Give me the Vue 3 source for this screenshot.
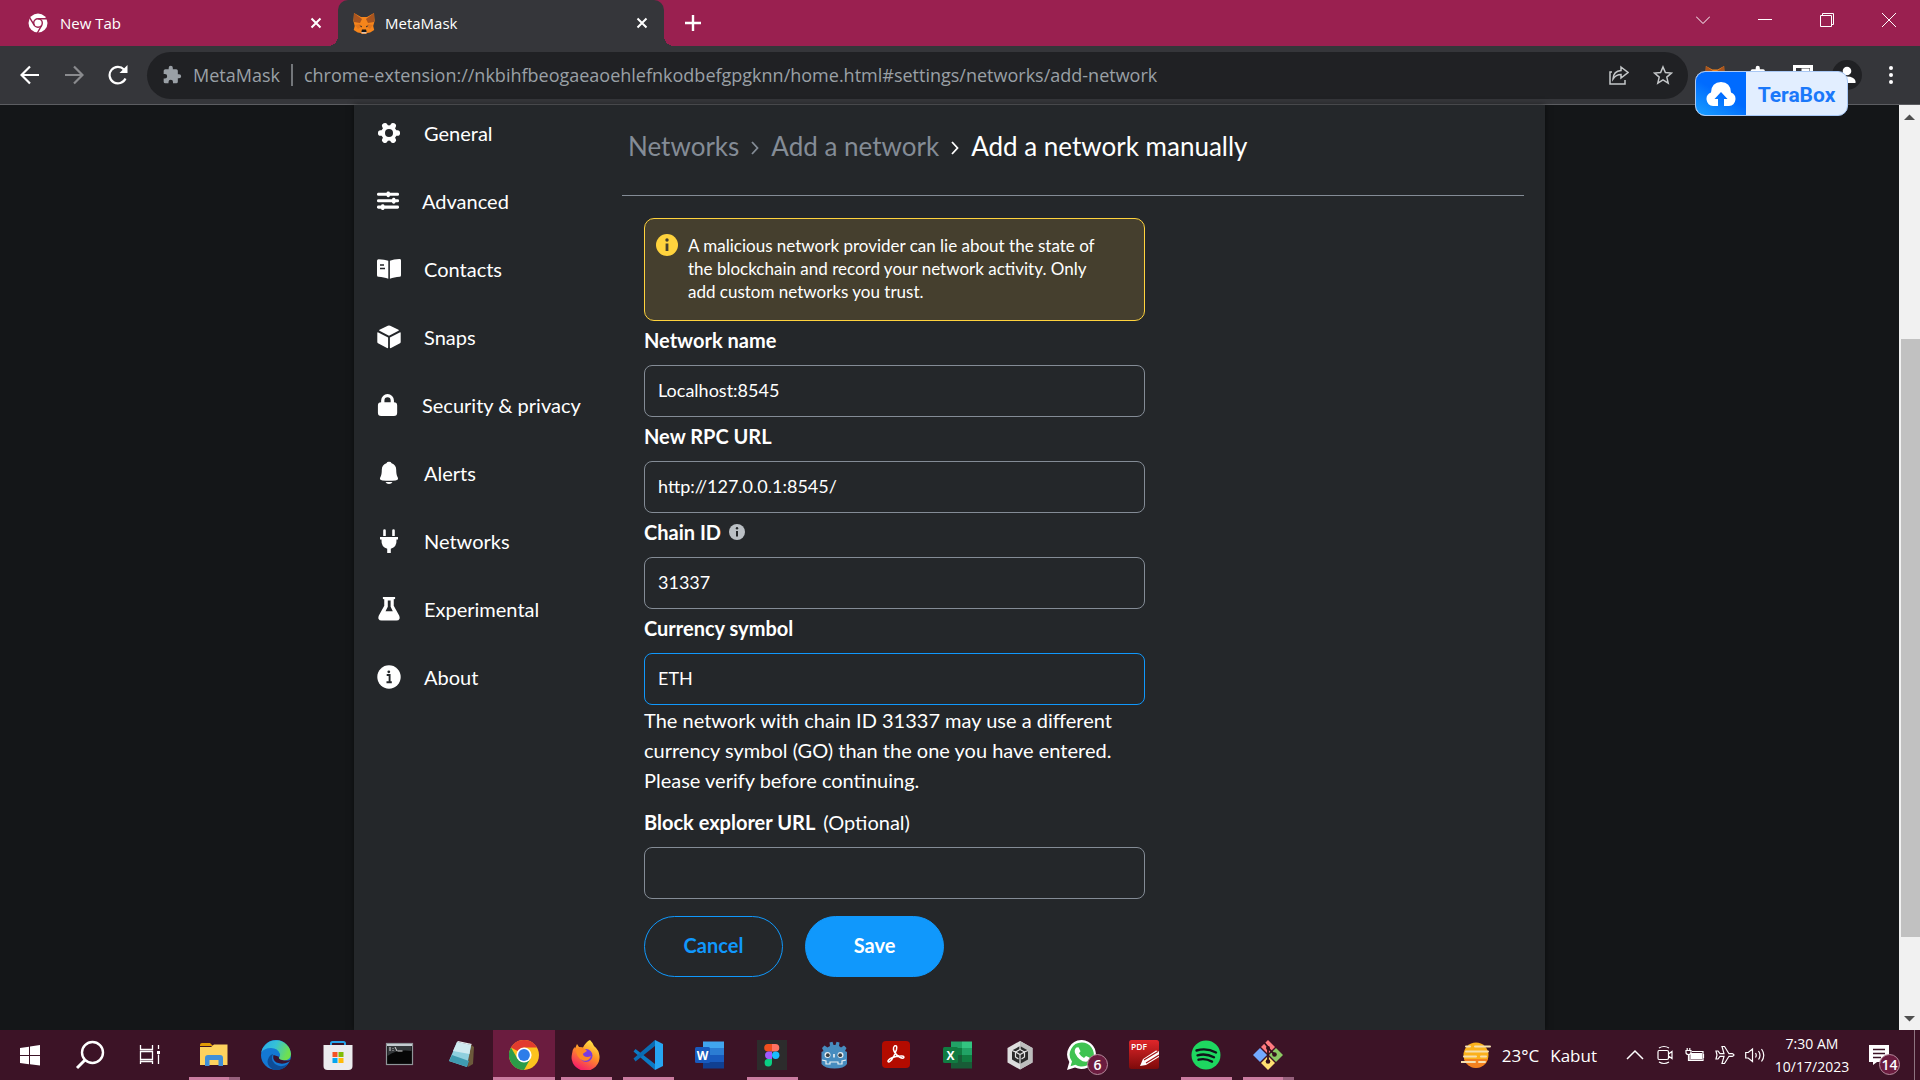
<script setup>
import { ref } from 'vue'

const address = ref('chrome-extension://nkbihfbeogaeaoehlefnkodbefgpgknn/home.html#settings/networks/add-network')

const foxArt =
  '<path d="M1 1l7 4h6l7-4 .6 8-1.4 5 1 4-4 2.500-3 .5-1.500 1.500h-3.500L7.700 21l-3-.5-4-2.500 1-4L.4 9z" fill="#f6851b"/>' +
  '<path d="M1 1l8 6-2 4-6-1zM21 1l-8 6 2 4 6-1z" fill="#a8541f"/>' +
  '<path d="M2 13l5-1 1 3-3 2zM20 13l-5-1-1 3 3 2z" fill="#e4761b"/>' +
  '<path d="M6.500 13.500l2.500.5-.5 1.500zM15.500 13.500l-2.500.5.5 1.500z" fill="#2a2a33"/>' +
  '<path d="M8 19l1 2.500h4L14 19l-1 .8H9z" fill="#d7c1b3"/><path d="M9 17.500h4l.7 2.500H8.300z" fill="#161616"/>'

const puzzleArt =
  '<path d="M20.500 11H19V7a2 2 0 0 0-2-2h-4V3.500a2.500 2.500 0 0 0-5 0V5H4a2 2 0 0 0-2 2v3.800h1.500a2.700 2.700 0 0 1 0 5.400H2V20a2 2 0 0 0 2 2h3.800v-1.500a2.700 2.700 0 0 1 5.400 0V22H17a2 2 0 0 0 2-2v-4h1.500a2.500 2.500 0 0 0 0-5z" fill="currentColor"/>'

const navItems = [
  { label: 'General', art: '<g fill="currentColor"><circle cx="12" cy="12" r="7.800"/><rect x="9.200" y="1" width="5.600" height="22" rx="2.600" transform="rotate(30 12 12)"/><rect x="9.200" y="1" width="5.600" height="22" rx="2.600" transform="rotate(90 12 12)"/><rect x="9.200" y="1" width="5.600" height="22" rx="2.600" transform="rotate(150 12 12)"/></g><circle cx="12" cy="12" r="4" fill="#24272a"/>' },
  { label: 'Advanced', narrow: true, art: '<g fill="currentColor"><rect x="0" y="3" width="24" height="3.400" rx="1.500"/><rect x="0" y="10" width="24" height="3.400" rx="1.500"/><rect x="0" y="17" width="24" height="3.400" rx="1.500"/><rect x="10.500" y="1.500" width="3.500" height="6.400" rx="1.500"/><rect x="16.500" y="8.500" width="3.500" height="6.400" rx="1.500"/><rect x="4.500" y="15.500" width="3.500" height="6.400" rx="1.500"/></g>' },
  { label: 'Contacts', art: '<path d="M11.300 3.800v18C8.500 20.600 5 20 1.500 19.800Q0 19.700 0 18.200V3.800Q0 2.200 1.600 2.200 7.500 2.300 11.300 3.800zM12.900 3.800v18c2.800-1.200 6.200-1.800 9.700-2q1.400-.1 1.400-1.600V3.500q0-1.500-1.600-1.400-5.700.2-9.500 1.700z" fill="currentColor"/><path d="M3 8h4M3 11.500h5" stroke="#24272a" stroke-width="1.500"/>' },
  { label: 'Snaps', art: '<path d="M12 .5q.6 0 1.200.3l8.300 3.900q.9.5 0 1L12 10.700 2.500 5.700q-.9-.5 0-1L10.800.8Q11.400.5 12 .5zM.3 8q0-1 1-.6l9.800 5v9.800q0 1.300-1.100.8l-8.500-4.400Q.3 18 .3 17zM23.700 8q0-1-1-.6l-9.800 5v9.800q0 1.300 1.100.8l8.500-4.400q1.200-.6 1.200-1.600z" fill="currentColor"/>' },
  { label: 'Security & privacy', narrow: true, art: '<path d="M4.500 9V7a7 7 0 0 1 14 0v2q3.500 0 3.500 3.500v8q0 3.500-3.500 3.500h-14Q1 24 1 20.500v-8Q1 9 4.500 9zm3.600 0h6.800V7a3.400 3.400 0 0 0-6.800 0z" fill="currentColor"/>' },
  { label: 'Alerts', art: '<path d="M12 .8q2 0 2.600 1.400 4.600 1.500 4.600 6.500 0 5.500 1.500 7.600 1.300 2.700-2.200 3.100-6.500.9-13 0-3.500-.4-2.200-3.100 1.500-2.100 1.500-7.600 0-5 4.600-6.500Q10 .8 12 .8zM8.500 21h7q-1 2-3.500 2t-3.500-2z" fill="currentColor"/>' },
  { label: 'Networks', art: '<path d="M6.200 1.500Q6.200.3 7.500.3t1.300 1.200V7H6.200zM15.200 1.500q0-1.200 1.300-1.200t1.300 1.200V7h-2.600zM3 8h18v2.500h-1.500q.5 7.500-5.700 9.300V24h-3.600v-4.200Q4 18 4.500 10.500H3z" fill="currentColor"/>' },
  { label: 'Experimental', art: '<path d="M7 1h10M8.500 2v7L3 19q-1.300 3.300 1.500 3.300h15q2.800 0 1.500-3.300L15.500 9V2" fill="currentColor" stroke="currentColor" stroke-width="2.500" stroke-linecap="round"/><path d="M10.800 3.500h2.800v6.200l2.200 4.500H8.500l2.300-4.500z" fill="#24272a"/>' },
  { label: 'About', art: '<circle cx="12" cy="12" r="11.700" fill="currentColor"/><path d="M9.700 10h2.900v7M9.500 17.300h5.300" fill="none" stroke="#24272a" stroke-width="1.900"/><circle cx="11.800" cy="6.800" r="1.400" fill="#24272a"/>' },
]

const networkName = ref('Localhost:8545')
const rpcUrl = ref('http://127.0.0.1:8545/')
const chainId = ref('31337')
const currency = ref('ETH')
const explorerUrl = ref('')

const systemButtons = [
  { name: 'Start', art: '<path d="M5 8l9-1.300V15H5zM15 6.500L25 5v10H15zM5 16h9v8.300L5 23zM15 16h10v9.500L15 24.200z" fill="#fff"/>' },
  { name: 'Search', art: '<circle cx="17.500" cy="12.500" r="10.500" fill="none" stroke="#fff" stroke-width="2.400"/><path d="M10 20l-8 8" stroke="#fff" stroke-width="3"/>' },
  { name: 'Task View', art: '<path d="M5.500 5v4.500h12V5M5.500 11.500h12v8h-12zM5.500 24v-3.500M5.500 21.500h12V24M23.500 5v4M23.500 14.500V24" fill="none" stroke="#fff" stroke-width="1.300"/><rect x="22" y="11" width="3" height="3" fill="#fff"/>' },
]

const apps = [
  { name: 'File Explorer', state: 'grouped', art: '<path d="M1 5q0-2 2-2h8l3 3H1z" fill="#e09a05"/><path d="M1 7h11l3-2.500h13.500V25H1z" fill="#fdd25e"/><path d="M6 26v-8q0-3 3-3h12q3 0 3 3v8h-4.500v-6h-9v6z" fill="#3f8fd8"/>' },
  { name: 'Microsoft Edge', art: '<defs><linearGradient id="eg" x1="0" y1="0" x2="1" y2=".3"><stop offset="0" stop-color="#2aa9e8"/><stop offset=".5" stop-color="#35c1d8"/><stop offset="1" stop-color="#6fe04f"/></linearGradient></defs><circle cx="15" cy="15" r="15" fill="#1478d4"/><path d="M.3 12.500A15 15 0 0 1 30 14q-.3 6-7 6.500-6 .2-5.500-2.500 2-1.500 1.500-4Q17 8 10 8 3 8 .3 12.500z" fill="url(#eg)"/><path d="M12 14q-3 6 2 10 6 4.500 13.500-.5A15 15 0 0 1 13 29.900Q3.500 25.500 8 17q1.500-2.500 4-3z" fill="#0e4c96"/><path d="M12.500 15q-1.500 5 3 7.500 6 2.500 12-.5 2-1 1.800-2Q25 21 21 20q-4-1-3-3.300z" fill="#3a1330"/>' },
  { name: 'Microsoft Store', art: '<path d="M8 6V3.500Q8 2 9.500 2h11Q22 2 22 3.500V6" fill="none" stroke="#27a4ea" stroke-width="2"/><path d="M.5 5h29v21q0 4-4 4h-21q-4 0-4-4z" fill="#ececee"/><path d="M9.500 12h5v5h-5z" fill="#f35325"/><path d="M15.500 12h5v5h-5z" fill="#81bc06"/><path d="M9.500 18h5v5h-5z" fill="#05a6f0"/><path d="M15.500 18h5v5h-5z" fill="#ffba08"/>' },
  { name: 'Command Prompt', art: '<rect x="1.500" y="3.500" width="26" height="21" fill="#060606" stroke="#8f9498" stroke-width="1.200"/><path d="M2 5h25" stroke="#c5cbd0" stroke-width="2"/><path d="M2.500 6h24v5Q12 9 2.500 16z" fill="#34373a"/><path d="M4 8h2M4 10h2M8 8v.8M8 10v.8M10 7l2 4M12.500 11h5" stroke="#d8d8d8"/>' },
  { name: 'Notepad++', art: '<path d="M22 3l5 4-1 17-5 3z" fill="#6c5a3b"/><path d="M10 2l14 3-4 22-18-6z" fill="#8fd0de"/><path d="M10 2l14 3-1.500 9L6 11z" fill="#cfeaf0"/><path d="M2 21l18 6 2-6L5 15z" fill="#3f9bb0"/><path d="M10 2l14 3 1-1-14-3z" fill="#e9eef0"/>' },
  { name: 'Google Chrome', state: 'active', art: '<circle cx="15" cy="15" r="15" fill="#fcc31e"/><path d="M2 7.500A15 15 0 0 1 28 7.500H15L8.500 11z" fill="#e23b2e"/><path d="M2 7.500A15 15 0 0 0 15 30l6.500-11.500L8.500 18.700z" fill="#2a9c48"/><circle cx="15" cy="15" r="7.600" fill="#fff"/><circle cx="15" cy="15" r="5.900" fill="#2d7de9"/>' },
  { name: 'Firefox', state: 'open', art: '<defs><linearGradient id="fg" x1=".8" y1="0" x2=".3" y2="1"><stop offset="0" stop-color="#fff04a"/><stop offset=".45" stop-color="#ff9326"/><stop offset="1" stop-color="#f5156c"/></linearGradient></defs><path d="M19 0q3 3 4 6 5 4 5.500 10A14 13.500 0 1 1 1 14q0-4 2.500-7l.5 1.500L6 4l2 3 4 .5q3-6 7-7.500z" fill="url(#fg)"/><circle cx="15" cy="15.500" r="6.500" fill="#7a3be0"/><path d="M5 9q5-3 9 0l2 2-3 2q-2 1 0 3 3 2 7 0-2 6-8 4.500Q5 18 5 9z" fill="#ff8a24"/>' },
  { name: 'Visual Studio Code', state: 'open', art: '<path d="M2.500 9L22 24v6L.5 11.500z" fill="#0b7ac4"/><path d="M2.500 21.500L22 6V0L.5 18.500z" fill="#0a6cb4"/><path d="M22 0l8 4v22l-8 4z" fill="#27a5f2"/>' },
  { name: 'Word', art: '<path d="M8 1.500h21V8H8z" fill="#41a5ee"/><path d="M8 8h21v7H8z" fill="#2b7cd3"/><path d="M8 15h21v7H8z" fill="#185abd"/><path d="M8 22h21v6.500H8z" fill="#103f91"/><rect x="0" y="7" width="15" height="16" rx="1.500" fill="#185abd"/><text x="7.500" y="19.500" text-anchor="middle" font-family="Open Sans, sans-serif" font-weight="700" font-size="12" fill="#fff">W</text>' },
  { name: 'Figma', state: 'open', art: '<rect width="30" height="30" fill="#2c2c2c"/><path d="M15 4h-4a3.800 3.800 0 0 0 0 7.600h4z" fill="#f24e1e"/><path d="M15 4h3.500a3.800 3.800 0 0 1 0 7.600H15z" fill="#ff7262"/><path d="M15 11.600h-4a3.800 3.800 0 0 0 0 7.400h4z" fill="#a259ff"/><circle cx="18.700" cy="15.300" r="3.700" fill="#1abcfe"/><path d="M15 19h-4a3.700 3.700 0 1 0 4 3.700z" fill="#0acf83"/>' },
  { name: 'Godot', art: '<path d="M11 6l-.5-3.500 3-.8L14.500 5h2l1-3.300 3 .8L20 6l2 1.500 3-2 2.500 2.500-1.500 3 2 1v12q-3 4.500-12.500 4.500T2.500 24V12l2-1L3 8l2.500-2.500 3 2z" fill="#478cbf"/><circle cx="8.500" cy="15" r="3" fill="#e8eef2"/><circle cx="21.500" cy="15" r="3" fill="#e8eef2"/><circle cx="8.800" cy="15.200" r="1.900" fill="#3a3f44"/><circle cx="21.200" cy="15.200" r="1.900" fill="#3a3f44"/><path d="M15 14v3.500" stroke="#e8eef2" stroke-width="1.700"/><path d="M3 20l4 1v3h4v-2h8v2h4v-3l4-1" fill="none" stroke="#e8eef2" stroke-width="1.200"/>' },
  { name: 'Acrobat', art: '<rect x="1" y="1" width="28" height="27" rx="4" fill="#b30b00"/><path d="M13.500 6q3-1.500 2 3.500-1.500 5.500-5 10.500-3.500 3.500-3.500 1 .5-2.500 8-4.500 8-1.500 8 .7-.5 2.200-4.500-.2-5-3-6-7.500-.3-2.500 1-3.500z" fill="none" stroke="#fff" stroke-width="1.500"/>' },
  { name: 'Excel', art: '<path d="M8 1.500h11V8H8z" fill="#21a366"/><path d="M19 1.500h10V8H19z" fill="#33c481"/><path d="M8 8h11v7H8z" fill="#107c41"/><path d="M19 8h10v7H19z" fill="#21a366"/><path d="M8 15h11v7H8z" fill="#185c37"/><path d="M19 15h10v7H19z" fill="#107c41"/><path d="M8 22h21v6.500H8z" fill="#185c37"/><rect x="0" y="7" width="15" height="16" rx="1.500" fill="#107c41"/><text x="7.500" y="19.500" text-anchor="middle" font-family="Open Sans, sans-serif" font-weight="700" font-size="12" fill="#fff">X</text>' },
  { name: 'Unity Hub', art: '<path d="M15 1l12.500 7v14.500L15 29.500l-12.500-7V8z" fill="#dedede"/><path d="M15 1l12.500 7v14.500L15 29.500z" fill="#bdbdbd"/><path d="M15 6l8 4.500v9L15 24l-8-4.500v-9z" fill="#2b2b2b"/><path d="M15 6v3.500l4.500 2.500L15 14.500 10.500 12 15 9.500M15 14.500V24M7 10.500l3.500 1.500v5l3 2M23 10.500L19.500 12v5l-3 2" fill="none" stroke="#e4e4e4" stroke-width="1.200"/>' },
  { name: 'WhatsApp', badge: '6', art: '<path d="M15 0a14.500 14.500 0 1 1-7 27.500L0 30l2.300-8A14.500 14.500 0 0 1 15 0z" fill="#fff"/><path d="M15 2.500a12 12 0 1 1-6.500 22.200l-5 1.500L5 21.500A12 12 0 0 1 15 2.500z" fill="#3fc351"/><path d="M9.500 7.500l2-.3 2 4-1.500 2q2 3.500 5 4.800l2-2 3.800 1.800q.3 3-3.800 4Q12 21.500 8 13q-1-3.500 1.500-5.500z" fill="#fff"/>' },
  { name: 'PDF-XChange', art: '<defs><linearGradient id="pg" x1="0" y1="0" x2="0" y2="1"><stop offset="0" stop-color="#e0262a"/><stop offset="1" stop-color="#7d0a0a"/></linearGradient></defs><rect width="30" height="29" rx="2.500" fill="url(#pg)"/><text x="2" y="9.500" font-family="Open Sans, sans-serif" font-weight="600" font-size="8.500" fill="#fff">PDF</text><path d="M11 26l3-7L27 10.500l3 1V17l-13 8z" fill="#fff"/><path d="M15 20l14-8.500M17 23l13-8" stroke="#a01315" stroke-width="1.200"/>' },
  { name: 'Spotify', state: 'open', art: '<circle cx="15" cy="15" r="14.500" fill="#1ed760"/><path d="M5.500 10.500q10-3 19.500 2M6.500 15.300q8.500-2.300 16.500 2M7.500 19.700q7-1.700 13.500 1.900" fill="none" stroke="#10131a" stroke-width="2.400" stroke-linecap="round"/>' },
  { name: 'Git', state: 'grouped', art: '<path d="M15 0l7 7-7 7-7-7z" fill="#ff7b80"/><path d="M23 8l7 7-7 7-7-7z" fill="#8bc964"/><path d="M15 16l7 7-7 7-7-7z" fill="#ffe072"/><path d="M7 8l7 7-7 7-7-7z" fill="#73a9ff"/><path d="M11.500 3L15 7v14M15 8l6 6" fill="none" stroke="#33101c" stroke-width="1.800"/><circle cx="15" cy="21.500" r="2.300" fill="#33101c"/><circle cx="21.500" cy="14.500" r="2.300" fill="#33101c"/><circle cx="15" cy="8" r="2" fill="#33101c"/>' },
]
</script>

<template>
  <div class="screen">
    <header class="tabstrip">
      <div class="tab">
        <svg class="favicon" viewBox="0 0 20 20" aria-hidden="true">
          <circle cx="10" cy="10" r="9.500" fill="#fff" />
          <circle cx="10" cy="10" r="4.300" fill="none" stroke="#9a2050" stroke-width="1.400" />
          <path d="M10 5.700h9M6.200 12.200L1.800 4.800M13.800 12.200L9.300 20" stroke="#9a2050" stroke-width="1.400" />
        </svg>
        <button class="tab-title" type="button">New Tab</button>
        <button class="tab-close" type="button" aria-label="Close New Tab">
          <svg viewBox="0 0 12 12"><path d="M1.500 1.500l9 9M10.500 1.500l-9 9" stroke="currentColor" stroke-width="2" /></svg>
        </button>
      </div>
      <div class="tab current">
        <svg class="favicon" viewBox="0 0 22 22" aria-hidden="true" v-html="foxArt"></svg>
        <button class="tab-title" type="button">MetaMask</button>
        <button class="tab-close" type="button" aria-label="Close MetaMask">
          <svg viewBox="0 0 12 12"><path d="M1.500 1.500l9 9M10.500 1.500l-9 9" stroke="currentColor" stroke-width="2" /></svg>
        </button>
      </div>
      <button class="new-tab" type="button" aria-label="New tab">
        <svg viewBox="0 0 16 16"><path d="M8 0v16M0 8h16" stroke="currentColor" stroke-width="2.400" /></svg>
      </button>
      <div class="window-controls">
        <button type="button" aria-label="Search tabs"><svg viewBox="0 0 14 14"><path d="M0 3.500l7 7 7-7" /></svg></button>
        <button type="button" aria-label="Minimize"><svg viewBox="0 0 14 14"><path d="M0 6.500h14" /></svg></button>
        <button type="button" aria-label="Restore"><svg viewBox="0 0 14 14"><path d="M.5 2.500h11v11H.5zM2.500 2.500v-2h11v11h-2" /></svg></button>
        <button type="button" aria-label="Close"><svg viewBox="0 0 14 14"><path d="M0 0l14 14M14 0L0 14" /></svg></button>
      </div>
    </header>

    <div class="toolbar">
      <button class="tool" type="button" aria-label="Back">
        <svg viewBox="0 0 20 20"><path d="M19 10H2M10 1.500L1.500 10l8.500 8.500" /></svg>
      </button>
      <button class="tool faded" type="button" aria-label="Forward">
        <svg viewBox="0 0 20 20"><path d="M1 10h17M10 1.500l8.500 8.500-8.500 8.500" /></svg>
      </button>
      <button class="tool" type="button" aria-label="Reload">
        <svg viewBox="0 0 20 20"><path d="M17.500 13.500A8.300 8.300 0 1 1 16 4.500" /><path d="M19.500 0v8h-8z" fill="currentColor" stroke="none" /></svg>
      </button>
      <div class="omnibox">
        <svg class="ext" viewBox="0 0 24 24" aria-hidden="true" v-html="puzzleArt"></svg>
        <span class="origin">MetaMask</span>
        <span class="divider"></span>
        <input v-model="address" class="address" type="text" aria-label="Address" />
        <button type="button" aria-label="Share">
          <svg viewBox="0 0 20 20"><path d="M3 7H1v12h15v-4M12 2l7 5.500L12 13v-3.500q-5 0-8 4.500.5-8 8-8.500z" /></svg>
        </button>
        <button type="button" aria-label="Bookmark this tab">
          <svg viewBox="0 0 20 20"><path d="M10 2l2.400 5.600 6 .5-4.600 4 1.400 6L10 14.900l-5.200 3.200 1.400-6-4.600-4 6-.5z" /></svg>
        </button>
      </div>
      <div class="extensions">
        <button type="button" aria-label="MetaMask extension"><svg viewBox="0 0 22 22" v-html="foxArt"></svg></button>
        <button type="button" aria-label="Extensions"><svg viewBox="0 0 24 24" v-html="puzzleArt"></svg></button>
        <button type="button" aria-label="Side panel"><svg viewBox="0 0 20 20"><path d="M1.500 1.500h17v17h-17zM10 5h5v9h-5z" fill="none" stroke="currentColor" stroke-width="3" /></svg></button>
        <button class="profile" type="button" aria-label="Profile"><svg viewBox="0 0 20 20"><circle cx="10" cy="6" r="4.300" fill="currentColor" /><path d="M1.500 18v-2q1.500-4.500 8.500-4.500t8.500 4.500v2z" fill="currentColor" /></svg></button>
        <button type="button" aria-label="Menu"><svg viewBox="0 0 20 20" fill="currentColor"><circle cx="10" cy="3" r="2" /><circle cx="10" cy="10" r="2" /><circle cx="10" cy="17" r="2" /></svg></button>
      </div>
    </div>

    <button class="terabox" type="button">
      <span class="cloud">
        <svg viewBox="0 0 30 24"><path d="M7 24A7 7 0 0 1 5 10.500Q5.500 0 15 0t10 10.500A7 7 0 0 1 23 24h-5V17h3.500L15 10l-6.500 7H12v7z" fill="#fff" /></svg>
      </span>
      <span class="brand">TeraBox</span>
    </button>

    <div class="viewport">
      <div class="page">
        <main class="panel">
          <nav class="side" aria-label="Settings">
            <a v-for="item in navItems" :key="item.label" href="#" :class="{ narrow: item.narrow }">
              <svg viewBox="0 0 24 24" aria-hidden="true" v-html="item.art"></svg>
              <span>{{ item.label }}</span>
            </a>
          </nav>

          <section class="content">
            <div class="crumbs">
              <a href="#">Networks</a>
              <svg viewBox="0 0 8 14"><path d="M1 1l5.500 6L1 13" /></svg>
              <a href="#">Add a network</a>
              <svg class="bright" viewBox="0 0 8 14"><path d="M1 1l5.500 6L1 13" /></svg>
              <span class="bright">Add a network manually</span>
            </div>

            <form class="form" @submit.prevent>
              <div class="notice">
                <svg viewBox="0 0 22 22" aria-hidden="true"><circle cx="11" cy="11" r="11" fill="#ffd33d" /><path d="M11 9.500V17" stroke="#453f2e" stroke-width="2.800" /><circle cx="11" cy="6" r="1.700" fill="#453f2e" /></svg>
                <p>A malicious network provider can lie about the state of<br />the blockchain and record your network activity. Only<br />add custom networks you trust.</p>
              </div>

              <label class="label" for="network-name">Network name</label>
              <input id="network-name" v-model="networkName" class="field" type="text" />

              <label class="label" for="rpc-url">New RPC URL</label>
              <input id="rpc-url" v-model="rpcUrl" class="field" type="text" />

              <label class="label" for="chain-id">
                Chain ID
                <svg viewBox="0 0 16 16" aria-hidden="true"><circle cx="8" cy="8" r="8" fill="#bbc0c5" /><path d="M8 7v5.500" stroke="#24272a" stroke-width="2" /><circle cx="8" cy="4.200" r="1.200" fill="#24272a" /></svg>
              </label>
              <input id="chain-id" v-model="chainId" class="field" type="text" />

              <label class="label" for="currency">Currency symbol</label>
              <input id="currency" v-model="currency" class="field focused" type="text" />
              <p class="warning">The network with chain ID 31337 may use a different<br />currency symbol (GO) than the one you have entered.<br />Please verify before continuing.</p>

              <label class="label" for="explorer">Block explorer URL <span>(Optional)</span></label>
              <input id="explorer" v-model="explorerUrl" class="field" type="text" />

              <div class="actions">
                <button type="button">Cancel</button>
                <button class="primary" type="submit">Save</button>
              </div>
            </form>
          </section>
        </main>
      </div>
      <div class="scrollbar" aria-hidden="true">
        <svg viewBox="0 0 21 21"><path d="M5 15l5.500-5.500L16 15z" fill="#4f4f4f" /></svg>
        <div class="before"></div>
        <div class="thumb"></div>
        <div class="after"></div>
        <svg viewBox="0 0 21 21"><path d="M5 7h11l-5.500 5.500z" fill="#4f4f4f" /></svg>
      </div>
    </div>

    <footer class="taskbar">
      <div class="system">
        <button v-for="item in systemButtons" :key="item.name" type="button" :aria-label="item.name">
          <svg viewBox="0 0 30 30" v-html="item.art"></svg>
        </button>
      </div>
      <div class="apps">
        <button v-for="app in apps" :key="app.name" type="button" :aria-label="app.name" :class="app.state">
          <svg viewBox="0 0 30 30" v-html="app.art"></svg>
          <span v-if="app.badge" class="badge">{{ app.badge }}</span>
        </button>
      </div>
      <div class="tray">
        <button class="weather" type="button">
          <svg viewBox="0 0 30 28" aria-hidden="true">
            <circle cx="15" cy="14" r="12.500" fill="#fbb11c" />
            <path d="M3 18a12.500 12.500 0 0 0 24 0z" fill="#f4811f" />
            <path d="M14 5.500h15M5 5.500h4M5 10.500h22M3 15.500h12M0 21h14M20 15.500h5M18 21h6" stroke="#f6dfae" stroke-width="2" stroke-linecap="round" />
          </svg>
          <span>23°C</span><span>Kabut</span>
        </button>
        <div class="status">
          <button type="button" aria-label="Show hidden icons"><svg viewBox="0 0 20 20"><path d="M2 14l8-8 8 8" stroke-width="1.500" /></svg></button>
          <button type="button" aria-label="Meet Now"><svg viewBox="0 0 20 20"><path d="M4 5.500h8q1.500 0 1.500 1.500v6q0 1.500-1.500 1.500H4Q3 14.500 3 13V7q0-1.500 1-1.500zM13.500 9L17 6.500v7L13.500 11M4 3q5-3 10 0M4 17q5 3 10 0" /></svg></button>
          <button type="button" aria-label="Battery"><svg viewBox="0 0 20 20"><path d="M5 9v6.500h13v-9H7M18.500 9v4M1 5.500h5v2q0 2-2.500 2T1 7.500zM2.200 5.500V3M4.800 5.500V3M3.500 9.500v6H5" /><path d="M6.500 8.500h10v5.500h-10z" fill="currentColor" /></svg></button>
          <button type="button" aria-label="Airplane mode"><svg viewBox="0 0 20 20"><path d="M1 6h2l2 2.700h4L7 1.500h2.500L14 8.700h3.500q3 1.300 0 2.600H14L9.500 18.500H7l2-7.200H5L3 14H1l1-4z" /></svg></button>
          <button type="button" aria-label="Volume"><svg viewBox="0 0 20 20"><path d="M.7 7.500h2.500L7.500 4v12.500L3.200 13H.7zM10.500 8q1.500 2.200 0 4.500M13.500 6q3 4.200 0 8.500M16.500 4q4.500 6.200 0 12.500" /></svg></button>
        </div>
        <div class="clock"><time>7:30 AM</time><time>10/17/2023</time></div>
        <button class="alerts" type="button" aria-label="Notifications">
          <svg viewBox="0 0 20 20"><path d="M0 0h20v17H8l-4 3v-3H0z" fill="#fff" /><path d="M4 4.500h12M4 8.500h12M4 12.500h8" stroke="#3c1326" stroke-width="1.300" /></svg>
          <span class="badge">14</span>
        </button>
        <span class="peek"></span>
      </div>
    </footer>
  </div>
</template>

<style>
body {
  margin: 0;
  background: #141618;
}
</style>

<style scoped>
.screen {
  position: relative;
  display: flex;
  flex-direction: column;
  min-height: 100vh;
  color: #fff;
  font-family: "Open Sans", "Segoe UI", sans-serif;
}
* {
  box-sizing: border-box;
}
button {
  padding: 0;
  border: 0;
  background: none;
  color: inherit;
  font: inherit;
}
input {
  min-width: 0;
  color: inherit;
  font: inherit;
  outline: none;
}
a {
  color: inherit;
  text-decoration: none;
}
p {
  margin: 0;
}
svg {
  display: block;
  flex: none;
}

/* Tab strip */
.tabstrip {
  display: flex;
  height: 46px;
  background: #9a2050;
}
.tab {
  display: flex;
  align-items: center;
  width: 338px;
  padding: 0 16px 0 28px;
  font-size: 15px;
}
.tab.current {
  position: relative;
  width: 326px;
  padding-left: 15px;
  border-radius: 10px 10px 0 0;
  background: #35363a;
}
.tab.current::before,
.tab.current::after {
  content: "";
  position: absolute;
  bottom: 0;
  width: 10px;
  height: 10px;
}
.tab.current::before {
  right: 100%;
  background: radial-gradient(circle at 0 0, transparent 10px, #35363a 10px);
}
.tab.current::after {
  left: 100%;
  background: radial-gradient(circle at 100% 0, transparent 10px, #35363a 10px);
}
.favicon {
  width: 20px;
  height: 20px;
  margin-right: 12px;
}
.tab.current .favicon {
  width: 22px;
  height: 22px;
  margin-right: 10px;
}
.tab-title {
  flex: 1;
  text-align: left;
}
.tab-close svg {
  width: 12px;
  height: 12px;
}
.new-tab {
  width: 58px;
  display: grid;
  place-items: center;
}
.new-tab svg {
  width: 16px;
  height: 16px;
}
.window-controls {
  display: flex;
  margin-left: auto;
}
.window-controls button {
  display: grid;
  place-items: center;
  width: 62px;
  height: 40px;
}
.window-controls svg {
  width: 14px;
  height: 14px;
  fill: none;
  stroke: #fff;
  stroke-width: 1;
}

/* Toolbar */
.toolbar {
  display: flex;
  align-items: center;
  height: 59px;
  padding: 0 7px 0 8px;
  border-bottom: 1px solid #5c5d61;
  background: #35363a;
}
.tool {
  display: grid;
  place-items: center;
  width: 44px;
  height: 44px;
}
.tool svg {
  width: 20px;
  height: 20px;
  fill: none;
  stroke: currentColor;
  stroke-width: 2.2;
}
.tool.faded {
  color: #8a8b8e;
}
.omnibox {
  display: flex;
  flex: 1;
  align-items: center;
  gap: 11px;
  height: 47px;
  margin-left: 7px;
  padding: 0 15px;
  border-radius: 24px;
  background: #202124;
  color: #9aa0a6;
  font-size: 18px;
}
.omnibox svg {
  width: 20px;
  height: 20px;
}
.omnibox button svg {
  fill: none;
  stroke: #c4c7c9;
  stroke-width: 1.5;
}
.omnibox button + button {
  margin-left: 13px;
}
.divider {
  width: 2px;
  height: 22px;
  background: #73767a;
}
.address {
  flex: 1;
  padding: 0;
  border: 0;
  background: none;
}
.extensions {
  display: flex;
  margin-left: 5px;
}
.extensions button {
  display: grid;
  place-items: center;
  width: 44px;
  height: 30px;
}
.extensions svg {
  width: 20px;
  height: 20px;
}
.extensions .profile {
  width: 30px;
  margin: 0 7px;
  border-radius: 50%;
  background: #202124;
}

.terabox {
  position: absolute;
  top: 71px;
  right: 72px;
  display: flex;
  width: 153px;
  height: 45px;
  overflow: hidden;
  border: 1px solid #a9c8f5;
  border-radius: 10px;
  background: #e2eeff;
  color: #1a78fa;
  font-family: Roboto, sans-serif;
  font-size: 21px;
  font-weight: 700;
}
.cloud {
  display: grid;
  place-items: center;
  width: 50px;
  height: 100%;
  background: linear-gradient(30deg, #1aa0ff, #006bff 50%);
}
.cloud svg {
  width: 30px;
  height: 24px;
}
.brand {
  flex: 1;
  line-height: 46px;
}

/* Page */
.viewport {
  display: flex;
  flex: 1;
  background: #141618;
}
.page {
  display: flex;
  flex: 1;
  justify-content: center;
}
.panel {
  display: flex;
  width: 100%;
  max-width: 1191px;
  background: #24272a;
  box-shadow: 0 0 6px rgba(0, 0, 0, 0.5);
  font-family: Lato, "Euclid Circular B", sans-serif;
  font-size: 20px;
}
.side {
  display: flex;
  flex-direction: column;
  gap: 40px;
  width: 268px;
  padding: 14px 0 24px 23px;
}
.side a {
  display: flex;
  align-items: center;
  gap: 23px;
  line-height: 28px;
  white-space: nowrap;
}
.side svg {
  width: 24px;
  height: 24px;
}
.side .narrow svg {
  width: 22px;
  height: 22px;
}
.content {
  flex: 1;
  padding-right: 21px;
}
.crumbs {
  display: flex;
  align-items: center;
  gap: 12px;
  height: 91px;
  padding: 0 6px 8px;
  border-bottom: 1px solid #848c96;
  color: #848c96;
  font-size: 26px;
}
.crumbs svg {
  width: 8px;
  height: 14px;
  margin-top: 4px;
  fill: none;
  stroke: currentColor;
  stroke-width: 1.8;
}
.crumbs .bright {
  color: #fff;
}
.form {
  display: flex;
  flex-direction: column;
  max-width: 523px;
  padding: 22px 0 24px 22px;
}
.notice {
  display: flex;
  gap: 10px;
  padding: 15px 11px 17px;
  border: 1px solid #ffd33d;
  border-radius: 10px;
  background: #453f2e;
  font-size: 17px;
  line-height: 23px;
}
.notice svg {
  width: 22px;
  height: 22px;
}
.notice p {
  white-space: nowrap;
}
.label {
  display: flex;
  align-items: center;
  gap: 8px;
  height: 44px;
  padding-bottom: 6px;
  font-weight: 700;
}
.label svg {
  width: 16px;
  height: 16px;
}
.label span {
  font-weight: 400;
}
.field {
  height: 52px;
  padding: 0 13px 2px;
  border: 1px solid #848c96;
  border-radius: 8px;
  background: #24272a;
  font-size: 18px;
}
.field.focused {
  border-color: #1098fc;
}
.warning {
  margin-bottom: 8px;
  line-height: 30px;
  white-space: nowrap;
}
.actions {
  display: flex;
  gap: 22px;
  margin-top: 17px;
}
.actions button {
  width: 139px;
  height: 61px;
  padding-bottom: 4px;
  border: 1px solid #1098fc;
  border-radius: 31px;
  color: #1098fc;
  font-weight: 700;
}
.actions .primary {
  background: #1098fc;
  color: #fff;
}

.scrollbar {
  display: flex;
  flex-direction: column;
  width: 21px;
  background: #f1f1f1;
}
.scrollbar svg {
  width: 21px;
  height: 21px;
}
.before {
  flex: 213;
}
.thumb {
  flex: 598;
  margin-left: 2px;
  background: #c1c1c1;
}
.after {
  flex: 72;
}

/* Taskbar */
.taskbar {
  display: flex;
  height: 50px;
  background: #3c1326;
}
.system,
.apps,
.status {
  display: flex;
}
.system button,
.apps button {
  position: relative;
  display: grid;
  place-items: center;
  width: 60px;
}
.apps {
  margin-left: 3px;
}
.apps button {
  width: 62px;
}
.system svg,
.apps svg {
  width: 30px;
  height: 30px;
}
.apps .active {
  background: #6b1c3f;
}
.apps .open::after,
.apps .active::after,
.apps .grouped::after {
  content: "";
  position: absolute;
  right: 5px;
  bottom: 0;
  left: 6px;
  height: 3px;
  background: #ca7ca0;
}
.apps .active::after {
  right: 0;
  left: 0;
}
.apps .grouped::after {
  background: linear-gradient(90deg, #ca7ca0 40px, #96607c 40px);
}
.badge {
  position: absolute;
  right: 5px;
  bottom: 5px;
  width: 21px;
  height: 21px;
  border: 1px solid #b58a9c;
  border-radius: 50%;
  background: #6b1c3f;
  font-size: 14px;
  font-weight: 600;
  line-height: 19px;
  text-align: center;
}
.tray {
  display: flex;
  align-items: center;
  margin-left: auto;
}
.weather {
  display: flex;
  align-items: center;
  gap: 11px;
  margin-right: 28px;
  font-size: 17px;
}
.weather svg {
  width: 30px;
  height: 28px;
}
.status {
  gap: 10px;
}
.status svg {
  width: 20px;
  height: 20px;
  fill: none;
  stroke: #fff;
  stroke-width: 1.2;
}
.clock {
  display: flex;
  flex-direction: column;
  width: 94px;
  font-size: 14px;
  line-height: 23px;
  text-align: center;
}
.alerts {
  position: relative;
  margin: 0 25px 0 10px;
}
.alerts svg {
  width: 20px;
  height: 20px;
}
.alerts .badge {
  right: -11px;
  bottom: -10px;
}
.peek {
  width: 1px;
  height: 50px;
  margin-right: 5px;
  background: #8d7480;
}
</style>
